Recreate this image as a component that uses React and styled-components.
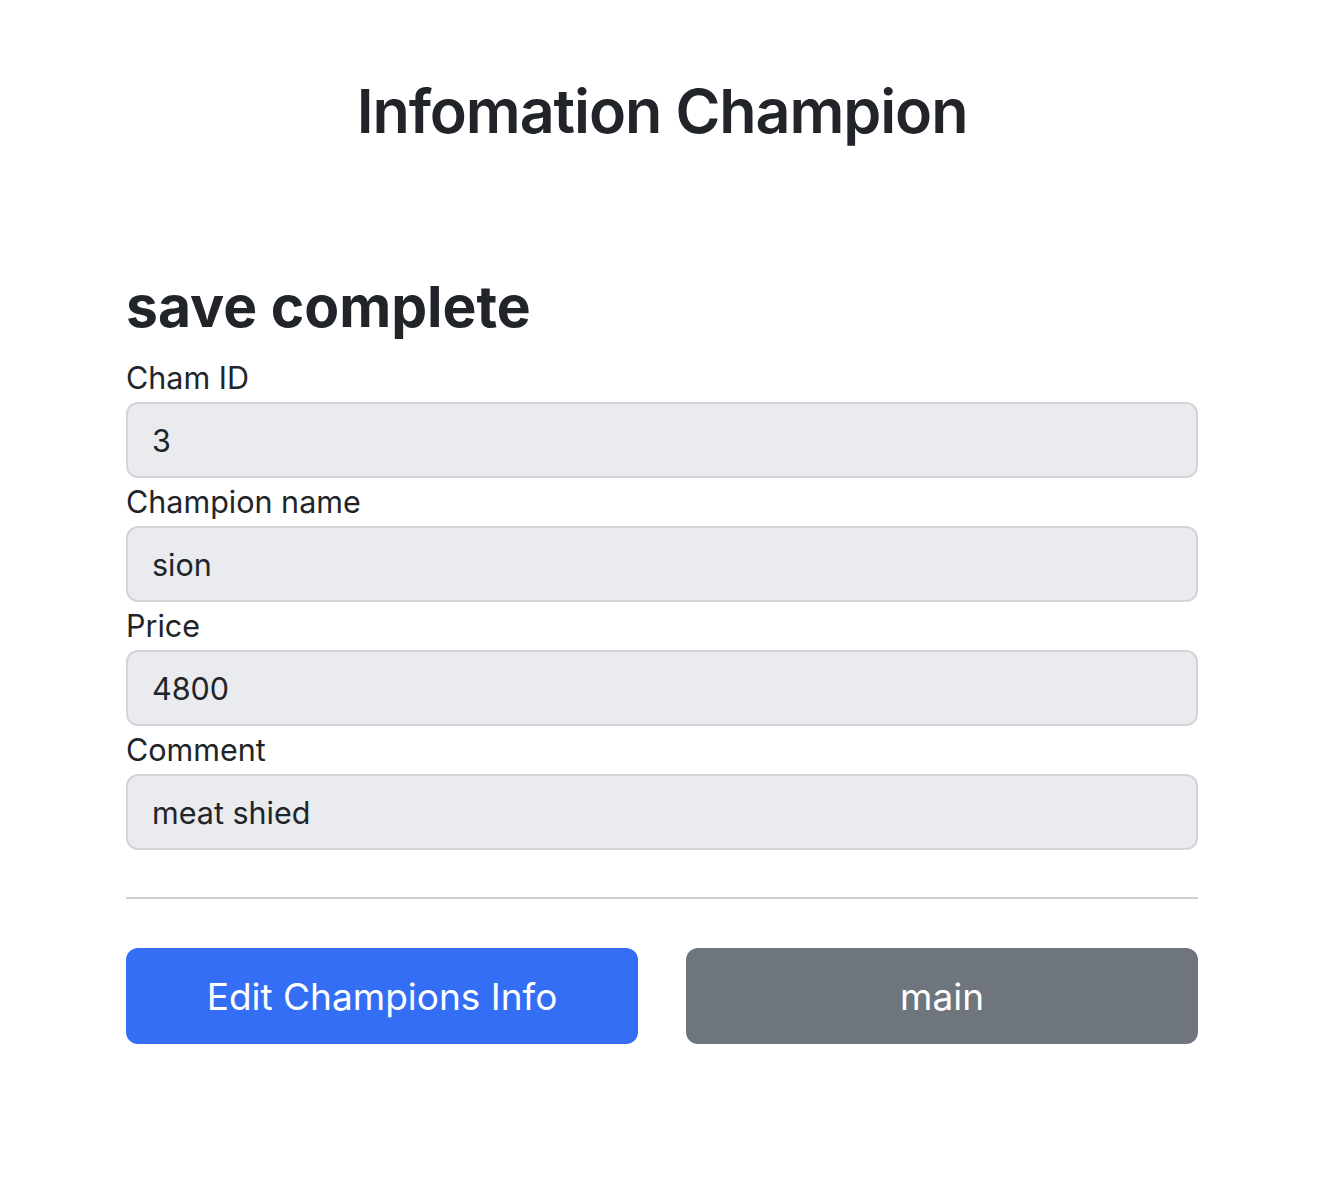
import React from "react";
import styled, { createGlobalStyle } from "styled-components";

const GlobalStyle = createGlobalStyle`
  * { box-sizing: border-box; }
  body {
    margin: 0;
    background: #fff;
    color: #212529;
    font-family: Inter, "Noto Sans", "Liberation Sans", sans-serif;
  }
`;

const fields = [
  { label: "Cham ID", value: "3" },
  { label: "Champion name", value: "sion" },
  { label: "Price", value: "4800" },
  { label: "Comment", value: "meat shied" },
];

const App = () => {
  return (
    <>
      <GlobalStyle />
      <Page>
        <Title>Infomation Champion</Title>
        <Form>
          <Status>save complete</Status>
          {fields.map((f) => (
            <Field key={f.label}>
              <Label>{f.label}</Label>
              <Input value={f.value} readOnly />
            </Field>
          ))}
          <Divider />
          <Actions>
            <Button variant="primary">Edit Champions Info</Button>
            <Button variant="secondary">main</Button>
          </Actions>
        </Form>
      </Page>
    </>
  );
};

export default App;

const Page = styled.div`
  width: 1072px;
  margin: 0 auto;
  padding-top: 73px;
`;

const Title = styled.h1`
  margin: 0;
  text-align: center;
  font-size: 61px;
  font-weight: 600;
  line-height: 77px;
  letter-spacing: -1.1px;
`;

const Form = styled.div`
  display: flex;
  flex-direction: column;
  margin-top: 124px;
`;

const Status = styled.h2`
  margin: 0 0 15px;
  font-size: 57px;
  font-weight: 700;
  line-height: 65px;
`;

const Field = styled.div`
  display: flex;
  flex-direction: column;
`;

const Label = styled.label`
  font-size: 30.5px;
  line-height: 48px;
`;

const Input = styled.input`
  width: 100%;
  height: 76px;
  padding: 0 24px;
  border: 2px solid #d1d5da;
  border-radius: 12px;
  background: #e9ebef;
  color: #212529;
  font-family: inherit;
  font-size: 30.5px;
  outline: none;
`;

const Divider = styled.hr`
  width: 100%;
  margin: 47px 0 49px;
  border: 0;
  border-top: 2px solid #cfd0d1;
`;

const Actions = styled.div`
  display: grid;
  grid-template-columns: 1fr 1fr;
  gap: 48px;
`;

const Button = styled.button`
  height: 96px;
  border: none;
  border-radius: 12px;
  background: ${(p) => (p.variant === "primary" ? "#336ef4" : "#6f757d")};
  color: #fff;
  font-family: inherit;
  font-size: 37px;
  cursor: pointer;
`;
